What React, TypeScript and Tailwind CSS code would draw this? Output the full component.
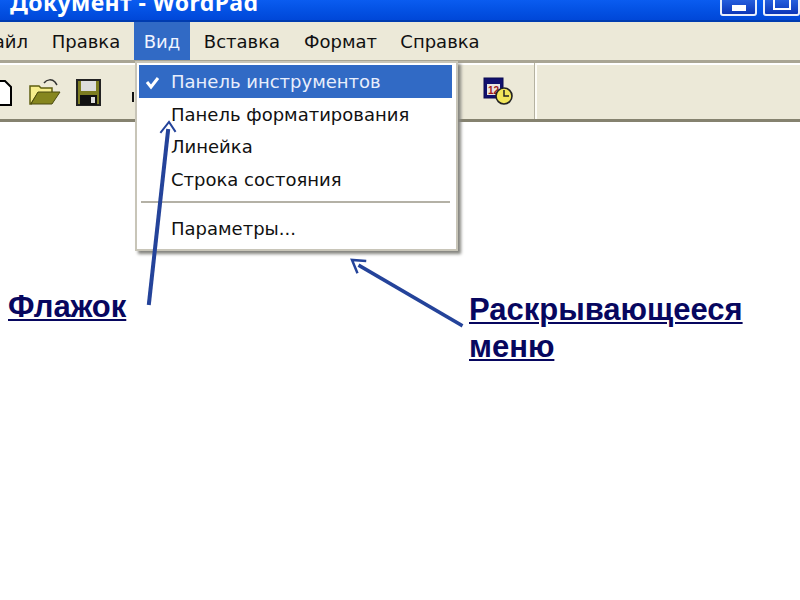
import React from 'react'

const menus = [
  { label: 'Правка', w: 'w-[96px]' },
  { label: 'Вид', w: 'w-[56px]', open: true },
  { label: 'Вставка', w: 'w-[104px]' },
  { label: 'Формат', w: 'w-[93px]' },
  { label: 'Справка', w: 'w-[106px]' },
]

function TitleBar() {
  return (
    <div className="flex h-[22px] items-start overflow-hidden border-b-[2px] border-b-[#003cb0] bg-gradient-to-b from-[#0a5cf0] to-[#0047d8] pl-[10px]">
      <div className="mt-[-12px] flex-1 text-[23px] font-bold leading-[28px] tracking-[0.4px] text-white font-['Noto_Sans',sans-serif]">
        Документ - WordPad
      </div>
      <div className="mt-[-6px] flex gap-[6px]">
        <div className="flex h-[22px] w-[37px] items-end justify-center rounded-[3px] border-2 border-[#e8eefc] bg-gradient-to-b from-[#2f6ae8] to-[#0c35b8] pb-[3px]">
          <div className="h-[6px] w-[14px] bg-white" />
        </div>
        <div className="h-[22px] w-[37px] rounded-[3px] border-2 border-[#e8eefc] bg-gradient-to-b from-[#2f6ae8] to-[#0c35b8]">
          <div className="mx-auto mt-[2px] h-[12px] w-[18px] border-2 border-white" />
        </div>
      </div>
    </div>
  )
}

function MenuBar() {
  return (
    <div className="flex h-[38px] bg-[#ece9d8] text-[18px] text-[#111] font-['DejaVu_Sans',sans-serif]">
      <div className="flex w-[38px] items-center justify-end pr-[10px]">
        <span>айл</span>
      </div>
      {menus.map(m => (
        <div key={m.label} className={`flex items-center justify-center ${m.w} ${m.open ? 'bg-[#316ac5] text-[#f0f4ff]' : ''}`}>
          {m.label}
        </div>
      ))}
    </div>
  )
}

function Toolbar() {
  return (
    <div className="flex h-[62px] items-center border-t-[3px] border-b-[3px] border-t-[#a9a594] border-b-[#85826f] bg-[#ece9d8] shadow-[inset_0_2px_0_#fff]">
      <svg width="140" height="40" viewBox="0 0 140 40" className="ml-[-4px] shrink-0">
        {/* new */}
        <path d="M3 10h6l6 6v18H3z" fill="#fff" stroke="#000" strokeWidth="2" />
        {/* open */}
        <path d="M34 33V15h9l2 2h11v5H42l-7 11z" fill="#f7ee8c" stroke="#5f5f10" strokeWidth="1.5" />
        <path d="M35 33l7-12h22l-8 12z" fill="#86861f" stroke="#4b4b10" strokeWidth="1" />
        <path d="M48 12c3-4 8-4 11-1l2 3" fill="none" stroke="#333" strokeWidth="1.5" />
        {/* save */}
        <rect x="81" y="9" width="23" height="25" fill="#7d7d22" stroke="#222" strokeWidth="2" />
        <rect x="85" y="10" width="15" height="10" fill="#ddd" />
        <rect x="84" y="24" width="17" height="10" fill="#111" />
        <rect x="95" y="26" width="4" height="6" fill="#ddd" />
        <rect x="136" y="21" width="2" height="10" fill="#111" />
      </svg>
      <svg width="34" height="34" viewBox="0 0 34 34" className="ml-[346px] shrink-0">
        <rect x="2" y="4" width="19" height="20" fill="#10106e" stroke="#0a0a50" />
        <rect x="5" y="10" width="13" height="11" fill="#e9e6e0" />
        <text x="6" y="20" fontSize="10" fontWeight="700" fill="#a01818" fontFamily="Liberation Sans, sans-serif">12</text>
        <circle cx="22" cy="22" r="8" fill="#f2e65a" stroke="#222" strokeWidth="1.6" />
        <path d="M22 16v6h5" fill="none" stroke="#222" strokeWidth="1.5" />
      </svg>
      <div className="ml-[19px] h-full w-[2px] bg-[#fdfcf6] shadow-[-1px_0_0_#b5b2a1]" />
    </div>
  )
}

function DropdownMenu() {
  return (
    <div className="absolute left-[135px] top-[61px] h-[190px] w-[323px] border-2 border-[#c8c5b8] bg-white py-[2px] pl-[2px] pr-[4px] text-[18px] text-[#111] shadow-[3px_3px_3px_#85857f] font-['DejaVu_Sans',sans-serif]">
      <div className="flex h-[33px] items-center bg-[#316ac5] text-[#e8eefc]">
        <svg width="32" height="32" viewBox="0 0 32 32" className="shrink-0">
          <path d="M8 16l4 5 7-9" fill="none" stroke="#fff" strokeWidth="3" />
        </svg>
        Панель инструментов
      </div>
      <div className="flex h-[32px] items-center pl-[32px]">Панель форматирования</div>
      <div className="flex h-[33px] items-center pl-[32px]">Линейка</div>
      <div className="flex h-[32px] items-center pl-[32px]">Строка состояния</div>
      <div className="mx-[2px] mt-[6px] h-[2px] bg-[#b4b1a6]" />
      <div className="mt-[9px] flex h-[32px] items-center pl-[32px]">Параметры...</div>
    </div>
  )
}

export default function App() {
  return (
    <div className="relative h-[600px] w-[800px] overflow-hidden bg-white">
      <TitleBar />
      <MenuBar />
      <Toolbar />
      <DropdownMenu />

      <svg width="800" height="600" viewBox="0 0 800 600" className="absolute left-0 top-0">
        <g fill="none" stroke="#24439a" strokeLinecap="square">
          <path d="M149 303L168 131" strokeWidth="4" />
          <path d="M161 132L169 122L175 131" strokeWidth="2" />
          <path d="M461 325L360 266" strokeWidth="3.5" />
          <path d="M357 272L352 260L365 261" strokeWidth="2.5" />
        </g>
      </svg>

      <div className="flex items-start pl-[8px] pt-[164px] text-[31px] font-bold leading-[37px] text-[#07075f] underline decoration-2 underline-offset-2 font-['Liberation_Sans',sans-serif]">
        <div className="w-[461px] pt-[2px]">Флажок</div>
        <div className="pt-[5px]">
          Раскрывающееся
          <br />
          меню
        </div>
      </div>
    </div>
  )
}
